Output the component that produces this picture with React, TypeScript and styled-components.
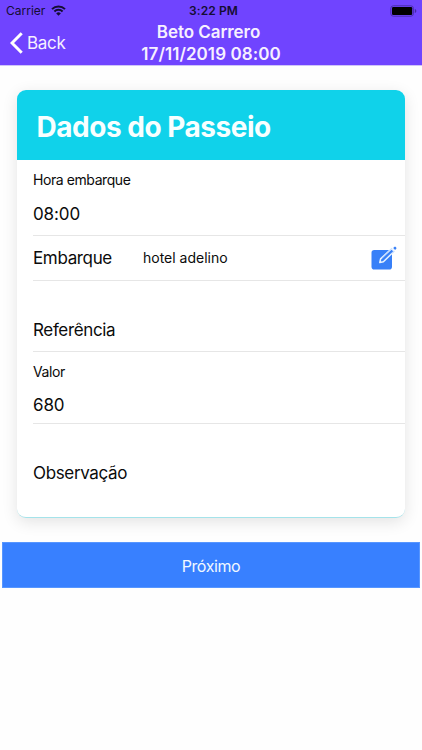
import React from 'react';
import styled, { createGlobalStyle } from 'styled-components';

const GlobalStyle = createGlobalStyle`
  * { box-sizing: border-box; }
  body { margin: 0; background: #fff; font-family: Inter, "Liberation Sans", sans-serif; color: #0b0b0b; }
`;

const Screen = styled.div`
  width: 422px;
  height: 750px;
  overflow: hidden;
  background: #fefefe;
`;

const Header = styled.header`
  height: 66px;
  background: #7044ff;
  border-bottom: 1px solid #cfc4f8;
`;

const StatusBar = styled.div`
  height: 21px;
  padding: 0 5px 0 6px;
  display: grid;
  grid-template-columns: 1fr auto 1fr;
  align-items: center;
  color: #150d33;
`;

const Carrier = styled.div`
  display: flex;
  align-items: center;
  gap: 6px;
  font-size: 12px;
  line-height: 21px;
  letter-spacing: 0;
`;

const Clock = styled.div`
  font-size: 12px;
  line-height: 21px;
  font-weight: 600;
  letter-spacing: 0.1px;
  padding-left: 4px;
`;

const Battery = styled.svg`
  justify-self: end;
`;

const NavBar = styled.nav`
  height: 44px;
  padding: 0 10px;
  display: grid;
  grid-template-columns: 120px 1fr 120px;
  align-items: center;
  color: #fff;
`;

const BackButton = styled.button`
  display: flex;
  align-items: center;
  gap: 4px;
  padding: 0;
  border: 0;
  background: none;
  color: #f6f0ff;
  font: 400 17px/22px Inter, sans-serif;
  letter-spacing: -0.3px;
`;

const Title = styled.h1`
  margin: 0;
  font-size: 17px;
  line-height: 22px;
  font-weight: 600;
  letter-spacing: 0.07px;
  text-align: center;
  white-space: nowrap;
  display: flex;
  flex-direction: column;
  align-items: center;
  color: #f6f0ff;
`;

const TitleName = styled.span`
  padding-right: 5px;
  letter-spacing: -0.05px;
`;

const Card = styled.section`
  margin: 24px 17px 0 16.5px;
  height: 428px;
  border-radius: 9px;
  overflow: hidden;
  background: #fff;
  border-bottom: 1px solid #a5e3ea;
  box-shadow: 0 4px 16px rgba(0, 0, 0, 0.11);
`;

const CardHeader = styled.div`
  height: 70px;
  padding: 3px 20px 0;
  display: flex;
  align-items: center;
  background: #10d2ea;
`;

const CardTitle = styled.h2`
  margin: 0;
  color: #f8ffff;
  font-size: 28px;
  line-height: 34px;
  font-weight: 700;
  letter-spacing: -0.48px;
`;

const Row = styled.div<{ $height: number; $top?: number; $stacked?: boolean; $last?: boolean }>`
  height: ${(p) => p.$height}px;
  margin-left: 16.5px;
  padding-top: ${(p) => p.$top ?? 0}px;
  display: flex;
  flex-direction: ${(p) => (p.$stacked ? 'column' : 'row')};
  align-items: ${(p) => (p.$stacked ? 'flex-start' : 'center')};
  border-bottom: ${(p) => (p.$last ? '0' : '1px solid #e6e6e6')};
`;

const Caption = styled.span`
  font-size: 14px;
  line-height: 18px;
  letter-spacing: -0.42px;
`;

const Label = styled.span`
  font-size: 17px;
  line-height: 22px;
  letter-spacing: -0.35px;
`;

const Value = styled.span<{ $gap: number }>`
  margin-top: ${(p) => p.$gap}px;
  font-size: 17px;
  line-height: 22px;
  letter-spacing: -0.1px;
`;

const Place = styled.span`
  font-size: 14px;
  line-height: 18px;
  letter-spacing: 0;
`;

const LabelCell = styled.div`
  width: 110px;
`;

const EditButton = styled.button`
  margin: 0 8.5px 0 auto;
  padding: 0;
  border: 0;
  background: none;
  display: flex;
`;

const NextButton = styled.button`
  display: block;
  width: 418px;
  height: 46px;
  margin: 24px 2px 0;
  padding: 2px 0 0;
  border: 1px solid #5796ff;
  background: #3880ff;
  color: #f1f8ff;
  font: 400 16px/22px Inter, sans-serif;
  letter-spacing: -0.4px;
`;

const WifiIcon = () => (
  <svg width="15" height="11" viewBox="0 0 15 11" fill="none" stroke="#150d33" strokeWidth="2">
    <path d="M1 4.1a9.2 9.2 0 0 1 13 0" />
    <path d="M3.4 6.5a5.8 5.8 0 0 1 8.2 0" />
    <path d="M7.5 10.7 5.2 8.4a3.2 3.2 0 0 1 4.6 0Z" fill="#150d33" stroke="none" />
  </svg>
);

const EditIcon = () => (
  <svg width="26" height="24" viewBox="0 0 26 24">
    <rect x="0.5" y="4" width="20.5" height="19.5" rx="2.8" fill="#3880f8" />
    <path d="m8.8 16.5.8-3.6L20.6 2.6l2.6 2.6L12.4 15.7Z" fill="#3880f8" stroke="#e8f3ff" strokeWidth="1.5" strokeLinejoin="round" />
    <path d="m22.2 2 1.1-1.1a1 1 0 0 1 1.4 0l.5.5a1 1 0 0 1 0 1.4l-1.1 1.1Z" fill="#3880f8" />
    <path d="M20.8 2.6 11 12.2M23.2 5.2 21 7.4" stroke="#8cb5fb" strokeWidth="0.5" />
  </svg>
);

export default function App() {
  return (
    <Screen>
      <GlobalStyle />
      <Header>
        <StatusBar>
          <Carrier>Carrier <WifiIcon /></Carrier>
          <Clock>3:22 PM</Clock>
          <Battery width="27" height="12" viewBox="0 0 27 12">
            <rect x="0.8" y="0.8" width="22.6" height="10.4" rx="2.6" fill="none" stroke="#4a2dad" />
            <rect x="2" y="2" width="20.2" height="8" rx="1.2" fill="#000" />
            <path d="M24.8 4v4c.9-.3 1.5-1.1 1.5-2s-.6-1.7-1.5-2Z" fill="#4528a4" />
          </Battery>
        </StatusBar>
        <NavBar>
          <BackButton>
            <svg width="13" height="22" viewBox="0 0 13 22" fill="none" stroke="#fff" strokeWidth="3">
              <path d="M11.7 1.2 2 11l9.7 9.8" />
            </svg>
            Back
          </BackButton>
          <Title>
            <TitleName>Beto Carrero</TitleName>
            <span>17/11/2019 08:00</span>
          </Title>
        </NavBar>
      </Header>
      <Card>
        <CardHeader>
          <CardTitle>Dados do Passeio</CardTitle>
        </CardHeader>
        <Row $height={76} $top={11} $stacked>
          <Caption>Hora embarque</Caption>
          <Value $gap={14}>08:00</Value>
        </Row>
        <Row $height={45}>
          <LabelCell><Label>Embarque</Label></LabelCell>
          <Place>hotel adelino</Place>
          <EditButton aria-label="Editar"><EditIcon /></EditButton>
        </Row>
        <Row $height={71} $top={38} $stacked>
          <Label>Referência</Label>
        </Row>
        <Row $height={72} $top={11} $stacked>
          <Caption>Valor</Caption>
          <Value $gap={13}>680</Value>
        </Row>
        <Row $height={93} $top={38} $stacked $last>
          <Label>Observação</Label>
        </Row>
      </Card>
      <NextButton>Próximo</NextButton>
    </Screen>
  );
}
